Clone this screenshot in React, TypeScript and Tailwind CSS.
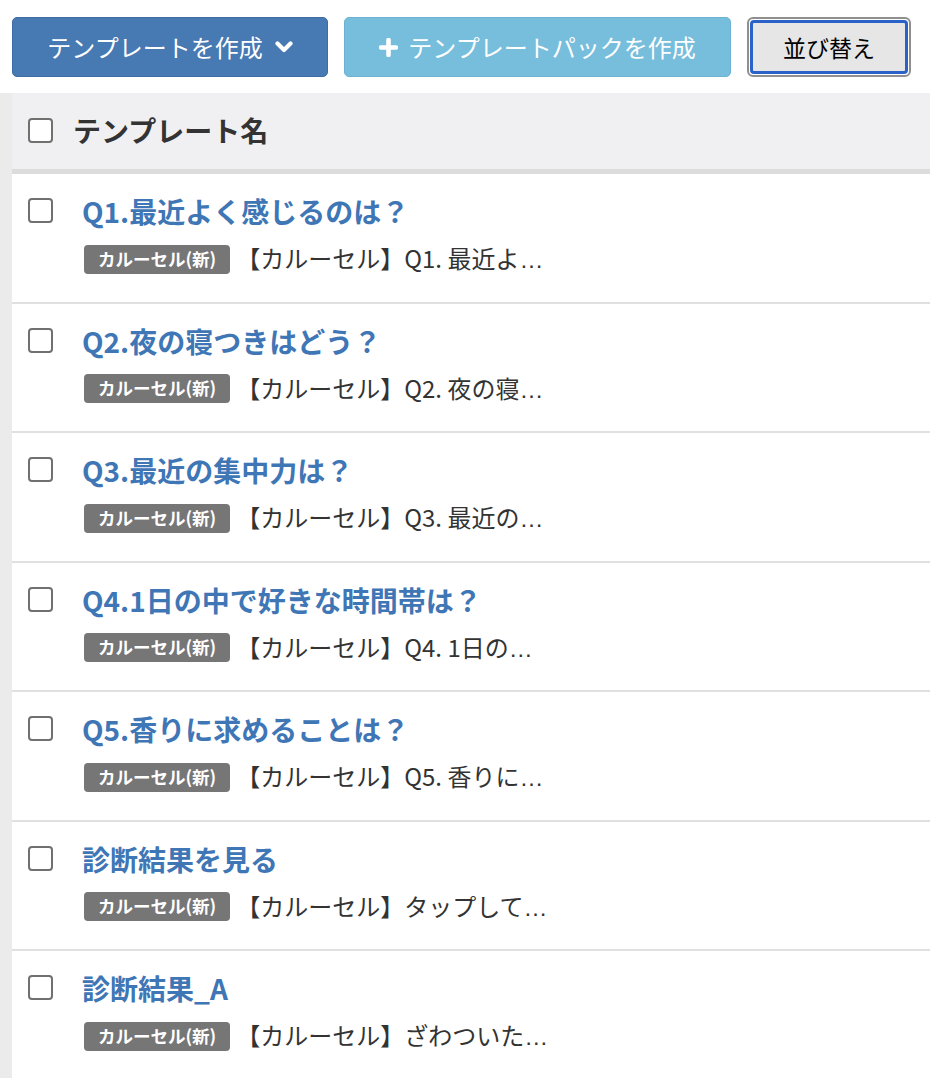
import React from "react";

const rows = [
  { title: "Q1.最近よく感じるのは？", desc: "【カルーセル】Q1. 最近よ" },
  { title: "Q2.夜の寝つきはどう？", desc: "【カルーセル】Q2. 夜の寝" },
  { title: "Q3.最近の集中力は？", desc: "【カルーセル】Q3. 最近の" },
  { title: "Q4.1日の中で好きな時間帯は？", desc: "【カルーセル】Q4. 1日の" },
  { title: "Q5.香りに求めることは？", desc: "【カルーセル】Q5. 香りに" },
  { title: "診断結果を見る", desc: "【カルーセル】タップして" },
  { title: "診断結果_A", desc: "【カルーセル】ざわついた" },
];

function Checkbox() {
  return <div className="w-[25px] h-[25px] shrink-0 rounded-[4px] border-2 border-[#707070] bg-white" />;
}

function Chevron() {
  return (
    <svg width="18" height="14" viewBox="0 0 18 14" className="shrink-0">
      <path d="M2.5 3.5 L9 10 L15.5 3.5" fill="none" stroke="white" strokeWidth="4.2" strokeLinecap="round" strokeLinejoin="round" />
    </svg>
  );
}

function Plus() {
  return (
    <svg width="19" height="19" viewBox="0 0 19 19" className="shrink-0">
      <path d="M9.5 2 V17 M2 9.5 H17" fill="none" stroke="white" strokeWidth="4.6" strokeLinecap="round" />
    </svg>
  );
}

export default function App() {
  return (
    <div
      className="w-[930px] h-[1078px] overflow-hidden bg-white"
      style={{ fontFamily: '"Noto Sans CJK JP", "Noto Sans", sans-serif' }}
    >
      <div className="flex items-start gap-4 pl-3 pt-[17px] h-[93px]">
        <button className="w-[316px] h-[60px] rounded-[5px] bg-[#4779b3] border border-[#3f6ca3] text-white text-[24px] flex items-center justify-center gap-[12px]">
          <span>テンプレートを作成</span>
          <Chevron />
        </button>
        <button className="w-[387px] h-[60px] rounded-[5px] bg-[#77bddc] border border-[#6cb3d3] text-white text-[24px] flex items-center justify-center gap-[10px]">
          <Plus />
          <span>テンプレートパックを作成</span>
        </button>
        <button className="w-[164px] h-[60px] rounded-[6px] border-2 border-[#8f8f8f] bg-white p-[1px]">
          <div className="w-full h-full rounded-[4px] border-[3px] border-[#2a62c8] bg-[#e6e6e6] flex items-center justify-center text-[23px] text-black">
            並び替え
          </div>
        </button>
      </div>
      <div className="bg-[#ebebeb] pl-3 h-[985px]">
        <div className="bg-[#f0f0f2] h-[81px] border-b-[5px] border-[#dcdcdc] flex items-center pl-4 gap-5 pb-[2px]">
          <Checkbox />
          <span className="text-[28px] font-bold text-[#333]">テンプレート名</span>
        </div>
        {rows.map((r, i) => (
          <div key={i} className="bg-white h-[129.5px] border-b-2 border-[#e0e0e0] flex pl-4 pt-6 gap-[29px]">
            <Checkbox />
            <div className="flex flex-col">
              <div className="text-[28px] font-bold text-[#3f76b5] leading-[38px] -mt-[6px]">{r.title}</div>
              <div className="flex items-center mt-[10px] gap-[6px]">
                <span className="h-[29px] rounded-[4px] bg-[#767676] text-white font-bold text-[17.5px] px-[14px] flex items-center ml-[2px]">
                  カルーセル(新)
                </span>
                <span className="text-[24px] text-[#333]">
                  {r.desc}
                  <span style={{ fontFamily: '"Liberation Sans", sans-serif' }}>…</span>
                </span>
              </div>
            </div>
          </div>
        ))}
      </div>
    </div>
  );
}
